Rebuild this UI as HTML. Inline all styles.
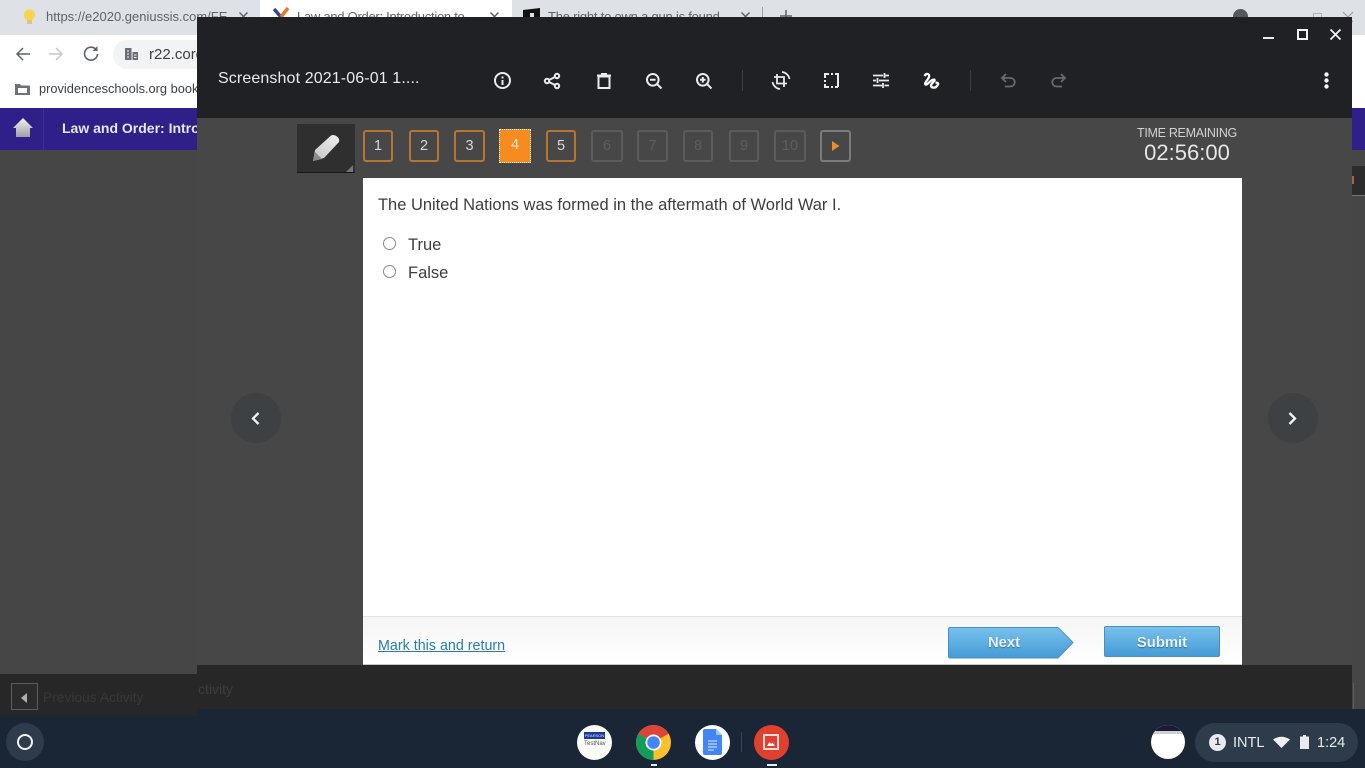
<!DOCTYPE html>
<html><head><meta charset="utf-8"><style>
html,body{margin:0;padding:0}
body{width:1365px;height:768px;position:relative;overflow:hidden;background:#464646;font-family:"Liberation Sans",sans-serif}
.a{position:absolute}
.t{position:absolute;white-space:nowrap}
.n{position:absolute;top:130px;width:31px;height:32px;box-sizing:border-box;border:2px solid #b9742f;border-radius:3px;color:#d8d8d8;font-size:14.5px;line-height:28px;text-align:center;background:#474747}
.d{border-color:#5c5c5c;color:#5e5e5e}
svg{position:absolute;overflow:visible}
.i{fill:none;stroke:#e8eaed;stroke-width:2}
</style></head><body>
<!-- browser behind -->
<div class="a" style="left:0;top:0;width:1365px;height:35px;background:#dee1e6"></div>
<div class="a" style="left:260px;top:0;width:252px;height:35px;background:#fff"></div>
<div class="t" style="left:46px;top:9px;font-size:13px;color:#5f6368;width:186px;overflow:hidden">https://e2020.geniussis.com/FE</div>
<div class="t" style="left:297px;top:9px;font-size:13px;color:#5f6368;letter-spacing:-.27px">Law and Order: Introduction to</div>
<div class="t" style="left:548px;top:9px;font-size:13px;color:#5f6368;letter-spacing:-.22px">The right to own a gun is found</div>
<svg style="left:239px;top:12px" width="9" height="9"><path d="M.5.5L8.500 8.500M8.500.5L.5 8.500" stroke="#5f6368" stroke-width="1.500"/></svg>
<svg style="left:490px;top:12px" width="9" height="9"><path d="M.5.5L8.500 8.500M8.500.5L.5 8.500" stroke="#5f6368" stroke-width="1.500"/></svg>
<svg style="left:741px;top:12px" width="9" height="9"><path d="M.5.5L8.500 8.500M8.500.5L.5 8.500" stroke="#5f6368" stroke-width="1.500"/></svg>
<div class="a" style="left:762px;top:7px;width:1px;height:12px;background:#9aa0a6"></div>
<svg style="left:780px;top:10px" width="12" height="10"><path d="M6 0V12M0 6H12" stroke="#5f6368" stroke-width="1.500"/></svg>
<div class="a" style="left:1233px;top:9px;width:15px;height:15px;border-radius:50%;background:#55585c"></div>
<div class="a" style="left:1313px;top:13px;width:7px;height:7px;border:1px solid #aeb2b6"></div>
<svg style="left:1343px;top:12px" width="10" height="8"><path d="M0 0L10 10M10 0L0 10" stroke="#9aa0a6" stroke-width="1.200"/></svg>
<svg style="left:23px;top:9px" width="14" height="16"><circle cx="6.500" cy="6" r="5.500" fill="#fbd34a"/><rect x="4" y="11" width="5" height="4" fill="#d9c58a"/></svg>
<svg style="left:272px;top:8px" width="18" height="12"><path d="M2 1L9 9" stroke="#2a4a8a" stroke-width="3.500"/><path d="M16 0L9 9" stroke="#e8762c" stroke-width="3.500"/></svg>
<svg style="left:523px;top:8px" width="17" height="10"><path d="M0 2L17 0V10H0z" fill="#111"/><rect x="7" y="5" width="4" height="4" fill="#ddd"/></svg>
<div class="a" style="left:0;top:35px;width:1365px;height:73px;background:#fff"></div>
<svg style="left:15px;top:46px" width="18" height="16"><path d="M15 8H2M8 2L2 8l6 6" fill="none" stroke="#5f6368" stroke-width="1.500"/></svg>
<svg style="left:48px;top:46px" width="18" height="16"><path d="M1 8H14M8 2l6 6-6 6" fill="none" stroke="#c4c6c9" stroke-width="1.500"/></svg>
<svg style="left:83px;top:45px" width="16" height="16"><path d="M13 4.500A6.500 6.500 0 1 0 14.500 9" fill="none" stroke="#5f6368" stroke-width="1.600"/><path d="M14.500 1v5h-5z" fill="#5f6368"/></svg>
<div class="a" style="left:113px;top:40px;width:100px;height:29px;background:#f1f3f4;border-radius:15px"></div>
<svg style="left:124px;top:47px" width="15" height="14"><path d="M1 1h6.500v12H1zM8.500 5h5.500v8H8.500z" fill="#6b6e72"/><path d="M3 4h2M3 7h2M3 10h2M10 8h2.500M10 10.500h2.500" stroke="#f1f3f4"/></svg>
<div class="t" style="left:149px;top:46px;font-size:15px;color:#3c4043">r22.core</div>
<svg style="left:15px;top:82px" width="15" height="13"><path d="M0 2h5l1 1.500h9V13H0z" fill="#6e7175"/><rect x="3" y="6" width="9" height="5" fill="#fff"/></svg>
<div class="t" style="left:39px;top:81px;font-size:12.800px;color:#3c4043">providenceschools.org bookmarks</div>
<!-- site header -->
<div class="a" style="left:0;top:108px;width:1365px;height:42px;background:#2f1f88"></div>
<div class="a" style="left:43px;top:108px;width:1px;height:42px;background:#3d2f96"></div>
<svg style="left:12px;top:118px" width="22" height="20"><defs><linearGradient id="h" x1="0" y1="0" x2="0" y2="1"><stop offset="0" stop-color="#f2f2f2"/><stop offset="1" stop-color="#a09fa6"/></linearGradient></defs><path d="M11 0L21 10H18V19H4V10H1z" fill="url(#h)"/></svg>
<div class="t" style="left:62px;top:120px;font-size:14px;font-weight:bold;color:#e8e6f2">Law and Order: Introduction</div>
<!-- right sliver -->
<div class="a" style="left:1352px;top:166px;width:13px;height:29px;background:#2c2c2c"></div>
<div class="a" style="left:1352px;top:195px;width:13px;height:1px;background:#777"></div>
<div class="a" style="left:1352px;top:176px;width:2px;height:8px;background:#a8683a"></div>
<div class="a" style="left:1353px;top:683px;width:1px;height:27px;background:#5d5d5d"></div>
<!-- window -->
<div class="a" style="left:197px;top:17px;width:1155px;height:101px;background:#202124"></div>
<div class="a" style="left:197px;top:118px;width:1155px;height:547px;background:#474747"></div>
<div class="a" style="left:197px;top:665px;width:1155px;height:44px;background:#272727"></div>
<div class="t" style="left:198px;top:681px;font-size:14px;color:#3e3e3e">ctivity</div>
<div class="t" style="left:218px;top:70px;font-size:16px;color:#e8eaed;letter-spacing:.12px">Screenshot 2021-06-01 1....</div>
<!-- window controls -->
<div class="a" style="left:1263px;top:37px;width:11px;height:2px;background:#e8eaed"></div>
<div class="a" style="left:1297px;top:29px;width:11px;height:11px;box-sizing:border-box;border:2px solid #f1f3f4"></div>
<svg style="left:1330px;top:29px" width="11" height="11"><path d="M.5.5L10.500 10.500M10.500.5L.5 10.500" stroke="#f1f3f4" stroke-width="1.800"/></svg>
<!-- toolbar icons -->
<svg class="i" style="left:494px;top:72px" width="18" height="18"><circle cx="8.500" cy="8.500" r="7.500"/><path d="M8.500 8v5M8.500 4.500v2"/></svg>
<svg class="i" style="left:544px;top:73px" width="16" height="16"><circle cx="13" cy="3" r="2.200"/><circle cx="3" cy="8" r="2.200"/><circle cx="13" cy="13" r="2.200"/><path d="M5 7L11 4M5 9L11 12"/></svg>
<svg class="i" style="left:597px;top:73px" width="14" height="16"><path d="M1.500 3.500H12.500V15H1.500zM0 2.500H14M4 1H10" stroke-width="2"/></svg>
<svg class="i" style="left:646px;top:73px" width="16" height="16"><circle cx="6.800" cy="6.800" r="5.800"/><path d="M11 11L15.500 15.500M4 6.800H9.600"/></svg>
<svg class="i" style="left:696px;top:73px" width="16" height="16"><circle cx="6.800" cy="6.800" r="5.800"/><path d="M11 11L15.500 15.500M4 6.800H9.600M6.800 4V9.600"/></svg>
<div class="a" style="left:742px;top:70px;width:1px;height:21px;background:#3c4043"></div>
<svg class="i" style="left:771px;top:71px" width="20" height="19"><path d="M6 3V12.500H16M3 6H13V16" stroke-width="1.800"/><path d="M11 1A8.500 8.500 0 0 1 18.500 8M9 18A8.500 8.500 0 0 1 1.500 11" stroke-width="1.700"/></svg>
<svg class="i" style="left:824px;top:73px" width="15" height="15"><path d="M1 5V1H5M7 1H9M11 1H14V14M1 7V9M1 11V14H5M7 14H9M11 14H14" stroke-width="2"/></svg>
<svg class="i" style="left:873px;top:73px" width="16" height="15"><path d="M0 2.500H10M12.500 2.500H16M11.500 0V5M0 7.500H3M6 7.500H16M4.500 5V10M0 12.500H9M11.500 12.500H16M10 10V15" stroke-width="1.800"/></svg>
<svg class="i" style="left:923px;top:73px" width="17" height="16"><path d="M1.500 3C3.500-.5 7 1 6 4S1 10 2.500 11.500C4.500 12.500 8 6 11 6.500C13.500 7.500 8 10 8 12.500S12 15.500 14 13 15.500 10 12.500 9.500" stroke-width="2.300" stroke="#fff"/></svg>
<div class="a" style="left:970px;top:70px;width:1px;height:21px;background:#3c4043"></div>
<svg style="left:1001px;top:73px" width="15" height="15"><path d="M5 1L1 5l4 4M1 5H9.500a4.200 4.200 0 0 1 0 8.500H4" fill="none" stroke="#676a6e" stroke-width="1.800"/></svg>
<svg style="left:1051px;top:73px" width="15" height="15"><path d="M10 1L14 5l-4 4M14 5H5.500a4.200 4.200 0 0 0 0 8.500H11" fill="none" stroke="#676a6e" stroke-width="1.800"/></svg>
<svg style="left:1324px;top:72px" width="5" height="18"><circle cx="2.500" cy="2.500" r="2.200" fill="#f1f3f4"/><circle cx="2.500" cy="8.500" r="2.200" fill="#f1f3f4"/><circle cx="2.500" cy="14.500" r="2.200" fill="#f1f3f4"/></svg>
<!-- pencil -->
<div class="a" style="left:297px;top:124px;width:58px;height:49px;background:#2f2f2f;border-bottom:1px solid #161616;box-sizing:border-box"></div>
<svg style="left:312px;top:134px" width="28" height="28"><defs><linearGradient id="p" x1="1" y1="0" x2="0" y2="1"><stop offset="0" stop-color="#f0f0f0"/><stop offset="1" stop-color="#c4c4c4"/></linearGradient></defs><path d="M19 1.500Q22 0 25 2.500T27 8L12 24 1 27 3 16z" fill="url(#p)"/><path d="M1 27L3 18 5 20 7 22 10 25z" fill="#8a8a8a"/></svg>
<svg style="left:346px;top:165px" width="8" height="7"><path d="M7 0V7H0z" fill="#777"/></svg>
<!-- nav numbers -->
<div class="n" style="left:363px;width:30px">1</div>
<div class="n" style="left:409px;width:30px">2</div>
<div class="n" style="left:454px">3</div>
<div class="a" style="left:499px;top:129px;width:32px;height:34px;box-sizing:border-box;background:#f68b1f;border:1px dotted #fff;color:#f5e6d0;font-size:14.5px;line-height:30px;text-align:center">4</div>
<div class="n" style="left:546px;width:30px">5</div>
<div class="n d" style="left:591px;width:32px">6</div>
<div class="n d" style="left:637px">7</div>
<div class="n d" style="left:683px;width:30px">8</div>
<div class="n d" style="left:729px;width:30px">9</div>
<div class="n d" style="left:774px;width:32px">10</div>
<div class="n" style="left:820px;border-color:#7c7c7c"></div>
<svg style="left:832px;top:141px" width="8" height="10"><path d="M0 0L7.500 5 0 10z" fill="#e88a2e"/></svg>
<div class="t" style="left:1087px;top:126px;width:200px;text-align:center;font-size:12.500px;color:#d2d2d2;letter-spacing:-.3px">TIME REMAINING</div>
<div class="t" style="left:1087px;top:140px;width:200px;text-align:center;font-size:22px;color:#e6e6e6">02:56:00</div>
<!-- content -->
<div class="a" style="left:363px;top:178px;width:879px;height:487px;background:#fff"></div>
<div class="a" style="left:363px;top:616px;width:879px;height:49px;background:linear-gradient(#f5f5f5,#fff);border-top:1px solid #e2e2e2;box-sizing:border-box;border-bottom:1px solid #c8c8c8"></div>
<div class="t" style="left:378px;top:196px;font-size:16.480px;color:#3d3d3d">The United Nations was formed in the aftermath of World War I.</div>
<div class="a" style="left:383px;top:237px;width:13px;height:13px;box-sizing:border-box;border:1.500px solid #8a8a8a;border-radius:50%;background:#fff"></div>
<div class="a" style="left:383px;top:265px;width:13px;height:13px;box-sizing:border-box;border:1.500px solid #8a8a8a;border-radius:50%;background:#fff"></div>
<div class="t" style="left:408px;top:236px;font-size:16.500px;color:#3d3d3d">True</div>
<div class="t" style="left:408px;top:264px;font-size:16.500px;color:#3d3d3d">False</div>
<div class="t" style="left:378px;top:638px;font-size:14.300px;color:#2a7ea6;text-decoration:underline">Mark this and return</div>
<svg style="left:948px;top:627px" width="126" height="32"><defs><linearGradient id="b" x1="0" y1="0" x2="0" y2="1"><stop offset="0" stop-color="#78c1ec"/><stop offset="1" stop-color="#449bd6"/></linearGradient></defs><path d="M2 .5H110L125 15.500 110 31H2Q.5 31 .5 29V2Q.5.500 2 .5z" fill="url(#b)" stroke="#4a8fbf"/></svg>
<div class="t" style="left:988px;top:635px;font-size:14.800px;font-weight:bold;color:#e8f2f8;text-shadow:0 1px 1px #3a6f96">Next</div>
<div class="a" style="left:1104px;top:626px;width:116px;height:31px;box-sizing:border-box;border:1px solid #4a8fbf;border-radius:2px;background:linear-gradient(#78c1ec,#449bd6)"></div>
<div class="t" style="left:1104px;top:635px;width:116px;text-align:center;font-size:14.800px;font-weight:bold;color:#e8f2f8;text-shadow:0 1px 1px #3a6f96">Submit</div>
<!-- side arrows -->
<div class="a" style="left:231px;top:393px;width:50px;height:50px;border-radius:50%;background:#3e4144"></div>
<div class="a" style="left:1268px;top:393px;width:50px;height:50px;border-radius:50%;background:#3e4144"></div>
<svg style="left:251px;top:412px" width="9" height="13"><path d="M7.500 1L2 6.500 7.500 12" fill="none" stroke="#f1f3f4" stroke-width="2.300"/></svg>
<svg style="left:1288px;top:412px" width="9" height="13"><path d="M1.500 1L7 6.500 1.500 12" fill="none" stroke="#f1f3f4" stroke-width="2.300"/></svg>
<!-- shelf -->
<div class="a" style="left:0;top:709px;width:1365px;height:59px;background:#1a2635"></div>
<!-- left bottom -->
<div class="a" style="left:0;top:674px;width:197px;height:42px;background:#272727"></div>
<div class="a" style="left:11px;top:683px;width:27px;height:27px;box-sizing:border-box;border:1px solid #5d5d5d;background:#2b2b2b"></div>
<svg style="left:21px;top:693px" width="6" height="10"><path d="M6 0V10L0 5z" fill="#b0b0b0"/></svg>
<div class="t" style="left:43px;top:690px;font-size:13.800px;color:#383838">Previous Activity</div>
<div class="a" style="left:6px;top:723px;width:38px;height:38px;border-radius:50%;background:#2d3b4b"></div>
<div class="a" style="left:17px;top:734px;width:16px;height:16px;box-sizing:border-box;border:2px solid #f1f3f4;border-radius:50%"></div>
<!-- apps -->
<div class="a" style="left:577px;top:725px;width:35px;height:35px;border-radius:50%;background:#fbfbf8"></div>
<div class="a" style="left:584px;top:732px;width:21px;height:7px;background:#1b3a9c;color:#dfe4f5;font-size:4px;line-height:7px;text-align:center">PEARSON</div>
<div class="t" style="left:584px;top:741px;width:21px;text-align:center;font-size:6px;color:#555">TestNav</div>
<svg style="left:636px;top:725px" width="35" height="35" viewBox="0 0 35 35"><circle cx="17.500" cy="17.500" r="17.500" fill="#fbc02d"/><path d="M17.500 17.500L2.400 8.800A17.500 17.500 0 0 1 32.600 8.800z" fill="#db4437"/><path d="M17.500 17.500L2.400 8.800A17.500 17.500 0 0 0 17.500 35z" fill="#0f9d58"/><circle cx="17.500" cy="17.500" r="8" fill="#fff"/><circle cx="17.500" cy="17.500" r="6.300" fill="#4285f4"/></svg>
<div class="a" style="left:651px;top:764px;width:6px;height:2px;background:#e8eaed"></div>
<div class="a" style="left:695px;top:725px;width:35px;height:35px;border-radius:50%;background:#fff"></div>
<svg style="left:703px;top:729px" width="19" height="26"><path d="M0 2Q0 0 2 0H13L19 6V24Q19 26 17 26H2Q0 26 0 24z" fill="#4285f4"/><path d="M13 0L19 6H13z" fill="#a1c2fa"/><path d="M5 12H14M5 15H14M5 18H14M5 21H11" stroke="#c9dafc" stroke-width="1.200"/></svg>
<div class="a" style="left:741px;top:732px;width:1px;height:20px;background:#3a4656"></div>
<div class="a" style="left:754px;top:725px;width:35px;height:35px;border-radius:50%;background:#e2402f"></div>
<svg style="left:763px;top:734px" width="16" height="16"><rect x="1" y="1" width="14" height="14" fill="none" stroke="#f8dad6" stroke-width="2"/><path d="M4 12L6.500 8 8 10 9.500 8.500 12 12z" fill="#fff"/></svg>
<div class="a" style="left:767px;top:764px;width:10px;height:2px;background:#e8eaed"></div>
<!-- tray -->
<div class="a" style="left:1151px;top:725px;width:34px;height:34px;border-radius:50%;background:#fff;overflow:hidden"><div style="height:6px;background:#1a1a40"></div><div style="height:3px;background:#cfcfcf"></div></div>
<div class="a" style="left:1195px;top:723px;width:163px;height:39px;border-radius:20px;background:#2d3b4b"></div>
<div class="a" style="left:1209px;top:734px;width:17px;height:17px;border-radius:50%;background:#e8eaed;color:#2d3b4b;font-size:11px;font-weight:bold;line-height:17px;text-align:center">1</div>
<div class="t" style="left:1233px;top:735px;font-size:14.500px;color:#e8eaed">INTL</div>
<svg style="left:1273px;top:736px" width="17" height="12"><path d="M0 3.500Q8.500-2 17 3.500L8.500 12z" fill="#eef0f2"/></svg>
<svg style="left:1300px;top:735px" width="9" height="14"><path d="M3 0H6V1.500H9V14H0V1.500H3z" fill="#e8eaed"/></svg>
<div class="t" style="left:1317px;top:735px;font-size:14.500px;color:#e8eaed">1:24</div>
</body></html>
